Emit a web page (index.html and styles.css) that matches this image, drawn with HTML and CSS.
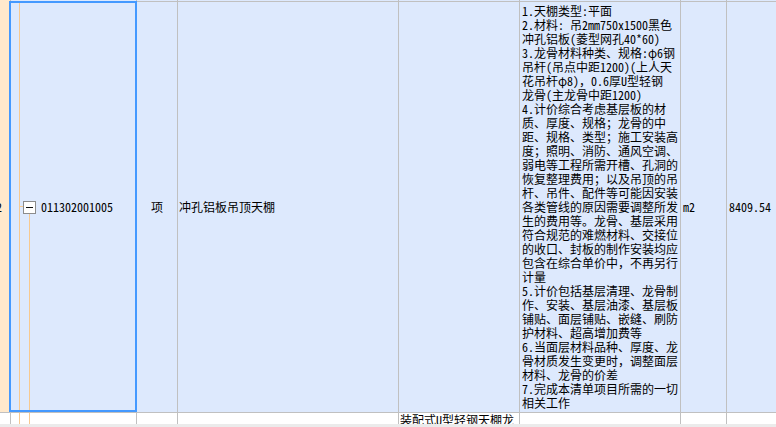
FILE: index.html
```html
<!DOCTYPE html>
<html lang="zh-CN">
<head>
<meta charset="utf-8">
<title>清单</title>
<link rel="stylesheet" href="styles.css">
</head>
<body>
<div class="sheet">
  <div class="row prev">
    <div class="cell rh"></div>
    <div class="cell c-code"></div>
    <div class="cell c-type"></div>
    <div class="cell c-name"></div>
    <div class="cell c-feat"></div>
    <div class="cell c-desc"></div>
    <div class="cell c-unit"></div>
    <div class="cell c-qty"></div>
  </div>
  <div class="row main">
    <div class="cell rh"><span class="rownum">2</span></div>
    <div class="cell c-code">
      <span class="indent"></span>
      <span class="guide"></span>
      <span class="dash"></span>
      <span class="node">
        <span class="node-top"></span>
        <span class="toggle"><span class="minus"></span></span>
        <span class="node-line"></span>
      </span>
      <span class="code-text">011302001005</span>
    </div>
    <div class="cell c-type center">项</div>
    <div class="cell c-name">冲孔铝板吊顶天棚</div>
    <div class="cell c-feat"></div>
    <div class="cell c-desc">
      <div class="ln">1.天棚类型:平面</div>
      <div class="ln">2.材料: 吊2mm750x1500黑色</div>
      <div class="ln">冲孔铝板(菱型网孔40*60)</div>
      <div class="ln">3.龙骨材料种类、规格:φ6钢</div>
      <div class="ln">吊杆(吊点中距1200)(上人天</div>
      <div class="ln">花吊杆φ8)，0.6厚U型轻钢</div>
      <div class="ln">龙骨(主龙骨中距1200)</div>
      <div class="ln">4.计价综合考虑基层板的材</div>
      <div class="ln">质、厚度、规格；龙骨的中</div>
      <div class="ln">距、规格、类型；施工安装高</div>
      <div class="ln">度；照明、消防、通风空调、</div>
      <div class="ln">弱电等工程所需开槽、孔洞的</div>
      <div class="ln">恢复整理费用；以及吊顶的吊</div>
      <div class="ln">杆、吊件、配件等可能因安装</div>
      <div class="ln">各类管线的原因需要调整所发</div>
      <div class="ln">生的费用等。龙骨、基层采用</div>
      <div class="ln">符合规范的难燃材料、交接位</div>
      <div class="ln">的收口、封板的制作安装均应</div>
      <div class="ln">包含在综合单价中，不再另行</div>
      <div class="ln">计量</div>
      <div class="ln">5.计价包括基层清理、龙骨制</div>
      <div class="ln">作、安装、基层油漆、基层板</div>
      <div class="ln">铺贴、面层铺贴、嵌缝、刷防</div>
      <div class="ln">护材料、超高增加费等</div>
      <div class="ln">6.当面层材料品种、厚度、龙</div>
      <div class="ln">骨材质发生变更时，调整面层</div>
      <div class="ln">材料、龙骨的价差</div>
      <div class="ln">7.完成本清单项目所需的一切</div>
      <div class="ln">相关工作</div>
    </div>
    <div class="cell c-unit">m2</div>
    <div class="cell c-qty">8409.54</div>
  </div>
  <div class="row next">
    <div class="cell rh"></div>
    <div class="cell c-code">
      <span class="indent"></span>
      <span class="guide"></span>
      <span class="dash-space"></span>
      <span class="node"><span class="node-line"></span></span>
    </div>
    <div class="cell c-type"></div>
    <div class="cell c-name"></div>
    <div class="cell c-feat">装配式U型轻钢天棚龙</div>
    <div class="cell c-desc"></div>
    <div class="cell c-unit"></div>
    <div class="cell c-qty"></div>
  </div>
  <div class="hbar"></div>
  <div class="selection"></div>
</div>
</body>
</html>
```

FILE: styles.css
```css
html, body {
  margin: 0;
  padding: 0;
}
body {
  width: 776px;
  height: 427px;
  overflow: hidden;
  background: #ffffff;
  font-family: "Noto Sans Mono CJK SC", "Noto Sans CJK SC", sans-serif;
  font-size: 12px;
  color: #000000;
}
.sheet {
  position: relative;
  width: 776px;
  height: 427px;
  overflow: hidden;
}
.row {
  display: flex;
  width: 900px;
}
.cell {
  flex: none;
  border-right: 1px solid #c0c0c0;
  border-bottom: 1px solid #c0c0c0;
  overflow: hidden;
  white-space: nowrap;
  box-sizing: content-box;
}
.rh { width: 10px; background: #ffe9cc; }
.c-code { width: 125px; }
.c-type { width: 40px; }
.c-name { width: 220px; }
.c-feat { width: 120px; }
.c-desc { width: 160px; }
.c-unit { width: 45px; }
.c-qty { flex: 1; }

.prev .cell { height: 1px; background: #dde9fd; }
.prev .rh { background: #ffe9cc; border-bottom-color: #ffe9cc; }

.main .cell {
  height: 410px;
  background: #dde9fd;
  display: flex;
  align-items: center;
  line-height: 14px;
}
.main .rh { background: #ffe9cc; }
.rownum { margin-left: -4px; line-height: 14px; }
.center { justify-content: center; }
.c-name { padding-left: 1px; width: 219px; }
.main .c-desc {
  flex-direction: column;
  align-items: flex-start;
  justify-content: center;
  padding-left: 2px;
  width: 158px;
}
.ln { height: 14px; line-height: 14px; white-space: nowrap; }
.main .c-unit { padding-left: 2px; width: 43px; }
.main .c-qty { padding-left: 2px; }

.next .cell { height: 11px; background: #ffffff; border-bottom: none; line-height: 14px; }
.next .rh { background: #ffffff; }
.next .c-feat { padding-left: 1px; width: 119px; line-height: 13px; }
.next .c-code { display: flex; align-items: stretch; }

/* tree connectors */
.indent { flex: none; width: 8px; align-self: stretch; }
.guide { flex: none; width: 1px; align-self: stretch; background: #f7c98f; }
.dash { flex: none; width: 3px; height: 1px; background: #f7c98f; margin-top: -1px; }
.dash-space { flex: none; width: 3px; }
.node {
  flex: none;
  width: 13px;
  align-self: stretch;
  display: flex;
  flex-direction: column;
  align-items: center;
}
.node-top { flex: 1; }
.node-line { flex: 1; width: 1px; background: #f7c98f; }
.toggle {
  flex: none;
  width: 11px;
  height: 11px;
  border: 1px solid #8c8c8c;
  background: #ffffff;
  display: flex;
  align-items: center;
  justify-content: center;
}
.minus { width: 7px; height: 1px; background: #111111; }
.code-text { margin-left: 5px; }

.hbar {
  height: 3px;
  background: #ebebeb;
}
.selection {
  position: absolute;
  left: 9px;
  top: 1px;
  width: 128px;
  height: 411px;
  box-sizing: border-box;
  border: 2px solid #4499ff;
  pointer-events: none;
}
```
